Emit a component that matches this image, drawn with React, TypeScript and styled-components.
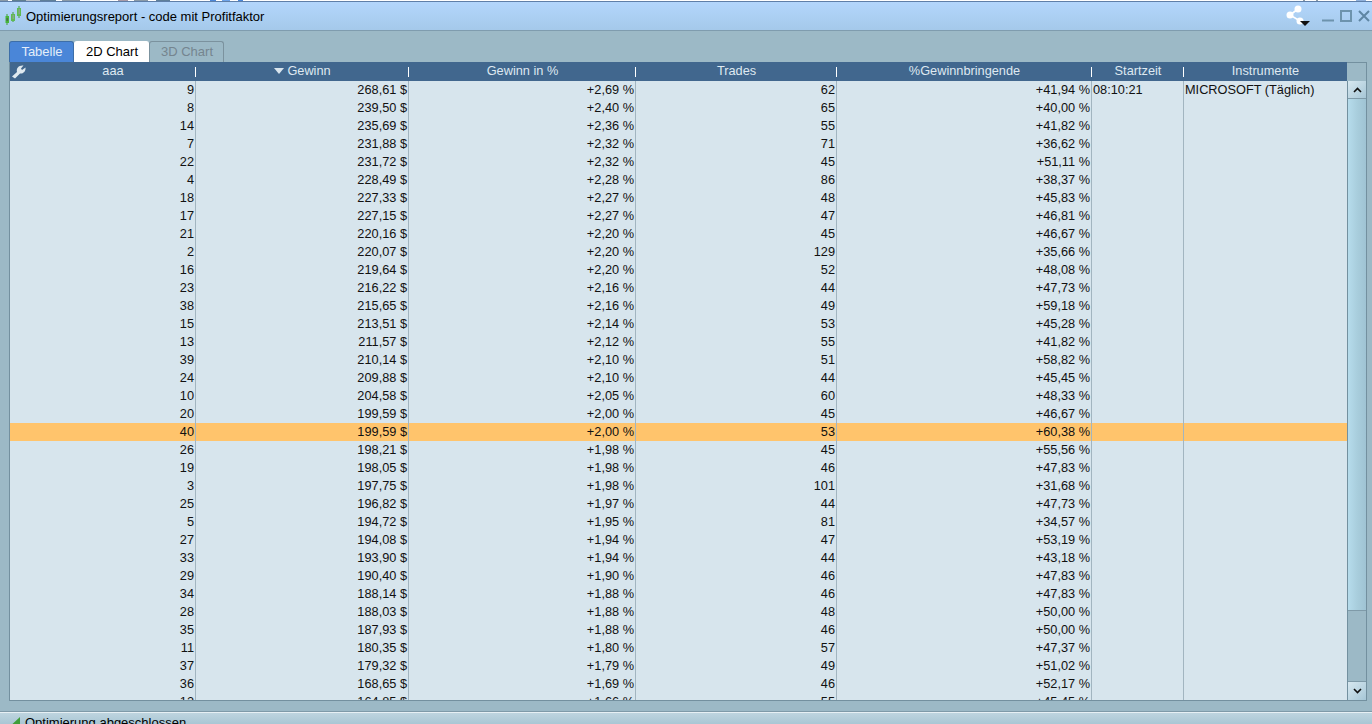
import React from 'react';
import styled, {createGlobalStyle} from 'styled-components';

const GlobalStyle = createGlobalStyle`
  html, body {
    margin: 0;
    padding: 0;
    height: 100%;
    overflow: hidden;
    background: #9cb9c6;
  }
`;

const Page = styled.div`
  width: 1372px;
  height: 724px;
  display: flex;
  flex-direction: column;
  overflow: hidden;
  background: #9cb9c6;
  font-family: "Liberation Sans", Arial, sans-serif;
  font-size: 13px;
  color: #000;
`;

// the window behind peeks out one pixel above the title bar
const TopEdge = styled.div`
  height: 1px;
  flex: none;
  background: linear-gradient(90deg,
    #8a9aa8 0 8px, #fff 8px 12px, #5f7f90 12px 26px, #b8c0c8 26px 40px, #5f7f9a 40px 56px, #fff 56px 62px, #8a9aa8 62px 80px,
    #fff 80px 118px, #a89aa8 118px 128px, #fff 128px 134px, #8a9aa8 134px 148px, #fff 148px 156px, #5f7f9a 156px 170px,
    #fff 170px 210px, #4a86d8 210px 216px, #fff 216px 222px, #6ea4ea 222px 230px, #fff 230px 238px, #4a86d8 238px 243px,
    #fff 243px 1303px, #8a9aa8 1303px 1305px, #fff 1305px 1316px, #8a9aa8 1316px 1318px, #fff 1318px 1356px,
    #8fb0dc 1356px 1366px, #fff 1366px 1372px);
`;

const TitleBar = styled.div`
  height: 30px;
  flex: none;
  box-sizing: border-box;
  display: flex;
  align-items: center;
  border-top: 1px solid #5f7fa8;
  border-bottom: 1px solid #7f9cae;
  background: linear-gradient(#b3d6fc, #a5c9ea);
  padding: 0 2px 0 5px;
`;

const TitleText = styled.span`
  margin-left: 4px;
  flex: 1;
`;

const TitleIcons = styled.div`
  display: flex;
  align-items: center;
  gap: 12px;
`;

const TabRow = styled.div`
  height: 21px;
  margin: 10px 0 0 9px;
  flex: none;
  display: flex;
  align-items: stretch;
`;

const Tab = styled.div<{$state: 'active' | 'open' | 'off'}>`
  display: flex;
  align-items: center;
  justify-content: center;
  width: ${p => (p.$state === 'active' ? 65 : 75)}px;
  box-sizing: border-box;
  padding: 0 0 2px 1px;
  border-radius: 3px 3px 0 0;
  background: ${p => (p.$state === 'active' ? '#4a86d8' : p.$state === 'open' ? '#fff' : '#9cb9c6')};
  color: ${p => (p.$state === 'active' ? '#e4eefa' : p.$state === 'open' ? '#000' : '#75858f')};
  border: 1px solid ${p => (p.$state === 'active' ? '#3d6ea8' : p.$state === 'open' ? '#fff' : '#7b929e')};
  border-bottom: none;
`;

const Table = styled.div`
  margin: 0 0 0 9px;
  width: 1358px;
  height: 639px;
  flex: none;
  display: flex;
  flex-direction: column;
  box-sizing: border-box;
  border: 1px solid #73909f;
  border-top: none;
  overflow: hidden;
`;

const columns = '186px 213px 227px 201px 255px 92px 163px';

const HeaderRow = styled.div`
  display: grid;
  grid-template-columns: ${columns} 1fr;
  height: 19px;
  flex: none;
  font-size: 12.75px;
`;

const HeaderCell = styled.div<{$last?: boolean; $wrench?: boolean}>`
  box-sizing: border-box;
  background: #41678e;
  color: #dfe9f1;
  display: flex;
  align-items: center;
  justify-content: center;
  position: relative;
  padding-left: ${p => (p.$wrench ? 20 : 0)}px;
  padding-bottom: 2px;
  &::after {
    content: '';
    display: ${p => (p.$last ? 'none' : 'block')};
    position: absolute;
    right: 0;
    top: 5px;
    width: 1px;
    height: 10px;
    background: #fff;
  }
`;

const HeaderGap = styled.div`
  background: #9cb9c6;
  border-top: 1px solid #73909f;
`;

const WrenchSlot = styled.span`
  position: absolute;
  left: 1px;
  top: 2px;
  display: flex;
`;

const SortArrow = styled.span`
  width: 0;
  height: 0;
  margin-right: 3px;
  border-left: 5px solid transparent;
  border-right: 5px solid transparent;
  border-top: 6px solid #d9e5ee;
`;

const Body = styled.div`
  flex: 1;
  display: flex;
  min-height: 0;
`;

const Rows = styled.div`
  width: 1337px;
  flex: none;
  background: #d7e5ed;
  overflow: hidden;
  font-size: 12.75px;
`;

const Row = styled.div<{$hot?: boolean}>`
  display: grid;
  grid-template-columns: ${columns};
  height: 18px;
  background: ${p => (p.$hot ? '#ffc46c' : 'transparent')};
`;

const Cell = styled.div<{$left?: boolean}>`
  box-sizing: border-box;
  border-right: 1px solid #a2b5c0;
  line-height: 17px;
  padding: 0 1px;
  text-align: ${p => (p.$left ? 'left' : 'right')};
  white-space: nowrap;
  overflow: hidden;
  color: #111;
  &:last-child {
    border-right: none;
  }
`;

const ScrollBar = styled.div`
  width: 19px;
  flex: none;
  display: flex;
  flex-direction: column;
  box-sizing: border-box;
  border-left: 1px solid #73909f;
  background: #9cb9c6;
`;

const ScrollButton = styled.div<{$down?: boolean}>`
  height: ${p => (p.$down ? 19 : 18)}px;
  flex: none;
  display: flex;
  align-items: center;
  justify-content: center;
  box-sizing: border-box;
  background: linear-gradient(135deg, #d7e8f0, #a6c6d6);
  border: solid #7f9aa8;
  border-width: ${p => (p.$down ? '1px 0 0 0' : '0 0 1px 0')};
`;

const ScrollThumb = styled.div`
  height: 512px;
  flex: none;
  box-sizing: border-box;
  border-bottom: 1px solid #7f9aa8;
  background: linear-gradient(90deg, #b6dcec, #a9cedd 50%, #9fc3d3);
`;

const ScrollTrack = styled.div`
  flex: 1;
`;

const StatusBar = styled.div`
  margin-top: 10px;
  flex: 1;
  min-height: 0;
  display: flex;
  align-items: flex-start;
  box-sizing: border-box;
  border-top: 1px solid #7f9aa8;
  box-shadow: inset 0 1px 0 #e7f0f4;
  background: linear-gradient(#c0d6e0, #a9c6d4);
  padding: 4px 0 0 7px;
`;

const StatusIcon = styled.svg`
  margin-top: 1px;
  flex: none;
`;

const StatusText = styled.span`
  margin-left: 5px;
  line-height: 14px;
`;

const rows: [string, string, string, string, string][] = [
  ['9', '268,61 $', '+2,69 %', '62', '+41,94 %'],
  ['8', '239,50 $', '+2,40 %', '65', '+40,00 %'],
  ['14', '235,69 $', '+2,36 %', '55', '+41,82 %'],
  ['7', '231,88 $', '+2,32 %', '71', '+36,62 %'],
  ['22', '231,72 $', '+2,32 %', '45', '+51,11 %'],
  ['4', '228,49 $', '+2,28 %', '86', '+38,37 %'],
  ['18', '227,33 $', '+2,27 %', '48', '+45,83 %'],
  ['17', '227,15 $', '+2,27 %', '47', '+46,81 %'],
  ['21', '220,16 $', '+2,20 %', '45', '+46,67 %'],
  ['2', '220,07 $', '+2,20 %', '129', '+35,66 %'],
  ['16', '219,64 $', '+2,20 %', '52', '+48,08 %'],
  ['23', '216,22 $', '+2,16 %', '44', '+47,73 %'],
  ['38', '215,65 $', '+2,16 %', '49', '+59,18 %'],
  ['15', '213,51 $', '+2,14 %', '53', '+45,28 %'],
  ['13', '211,57 $', '+2,12 %', '55', '+41,82 %'],
  ['39', '210,14 $', '+2,10 %', '51', '+58,82 %'],
  ['24', '209,88 $', '+2,10 %', '44', '+45,45 %'],
  ['10', '204,58 $', '+2,05 %', '60', '+48,33 %'],
  ['20', '199,59 $', '+2,00 %', '45', '+46,67 %'],
  ['40', '199,59 $', '+2,00 %', '53', '+60,38 %'],
  ['26', '198,21 $', '+1,98 %', '45', '+55,56 %'],
  ['19', '198,05 $', '+1,98 %', '46', '+47,83 %'],
  ['3', '197,75 $', '+1,98 %', '101', '+31,68 %'],
  ['25', '196,82 $', '+1,97 %', '44', '+47,73 %'],
  ['5', '194,72 $', '+1,95 %', '81', '+34,57 %'],
  ['27', '194,08 $', '+1,94 %', '47', '+53,19 %'],
  ['33', '193,90 $', '+1,94 %', '44', '+43,18 %'],
  ['29', '190,40 $', '+1,90 %', '46', '+47,83 %'],
  ['34', '188,14 $', '+1,88 %', '46', '+47,83 %'],
  ['28', '188,03 $', '+1,88 %', '48', '+50,00 %'],
  ['35', '187,93 $', '+1,88 %', '46', '+50,00 %'],
  ['11', '180,35 $', '+1,80 %', '57', '+47,37 %'],
  ['37', '179,32 $', '+1,79 %', '49', '+51,02 %'],
  ['36', '168,65 $', '+1,69 %', '46', '+52,17 %'],
  ['12', '164,85 $', '+1,66 %', '55', '+45,45 %'],
];

const headers = ['aaa', 'Gewinn', 'Gewinn in %', 'Trades', '%Gewinnbringende', 'Startzeit', 'Instrumente'];

function Candles() {
  return (
    <svg width="17" height="20" viewBox="0 0 17 20">
      <path d="M2 8v11M8 6v10M14 0v12" stroke="#3f9f35" strokeWidth="1"/>
      <rect x="0.500" y="10" width="3.500" height="7" fill="#46b53a"/>
      <rect x="1.500" y="12" width="1.500" height="3" fill="#4d6f4a"/>
      <rect x="6" y="8" width="4" height="7" fill="#5fbb52"/>
      <rect x="7.500" y="9" width="1.500" height="4" fill="#8aa58c"/>
      <rect x="12" y="2" width="4" height="8" fill="#5fbb52"/>
      <rect x="13.500" y="3" width="1.500" height="5" fill="#8aa58c"/>
    </svg>
  );
}

function ShareIcon() {
  return (
    <svg width="26" height="22" viewBox="0 0 26 22">
      <path d="M14 4L6 10L16 16" stroke="#fff" strokeWidth="1.600" fill="none"/>
      <circle cx="14" cy="4" r="3.500" fill="#fff"/>
      <circle cx="6" cy="10" r="3.500" fill="#fff"/>
      <circle cx="16" cy="16" r="3.500" fill="#fff"/>
      <path d="M16 16h10l-5 5z" fill="#111"/>
    </svg>
  );
}

function WindowButtons() {
  return (
    <svg width="48" height="14" viewBox="0 0 48 14">
      <path d="M0 11.500h12" stroke="#6d93ad" strokeWidth="2"/>
      <rect x="19" y="2" width="10" height="10" fill="none" stroke="#6d93ad" strokeWidth="2"/>
      <path d="M37 2l10 10M47 2L37 12" stroke="#5f86a3" strokeWidth="2"/>
    </svg>
  );
}

function Wrench() {
  return (
    <svg width="15" height="15" viewBox="0 0 15 15">
      <path d="M1 12.500L6 8C5 4 8 1 12.500 1.500L10 4.500L11 6L14.500 3.500C15 7.500 12 10 9 9.500L4 14.500Z" fill="#dfe9ef"/>
    </svg>
  );
}

function Chevron({down}: {down?: boolean}) {
  return (
    <svg width="9" height="6" viewBox="0 0 9 6">
      <path d={down ? 'M1 1l3.500 3.500L8 1' : 'M1 5l3.500-3.500L8 5'} stroke="#111" strokeWidth="1.600" fill="none"/>
    </svg>
  );
}

function App() {
  return (
    <Page>
      <GlobalStyle/>
      <TopEdge/>
      <TitleBar>
        <Candles/>
        <TitleText>Optimierungsreport - code mit Profitfaktor</TitleText>
        <TitleIcons>
          <ShareIcon/>
          <WindowButtons/>
        </TitleIcons>
      </TitleBar>
      <TabRow>
        <Tab $state="active">Tabelle</Tab>
        <Tab $state="open">2D Chart</Tab>
        <Tab $state="off">3D Chart</Tab>
      </TabRow>
      <Table>
        <HeaderRow>
          {headers.map((h, i) => (
            <HeaderCell key={h} $last={i === headers.length - 1} $wrench={i === 0}>
              {i === 0 && <WrenchSlot><Wrench/></WrenchSlot>}
              {i === 1 && <SortArrow/>}
              {h}
            </HeaderCell>
          ))}
          <HeaderGap/>
        </HeaderRow>
        <Body>
          <Rows>
            {rows.map((r, i) => (
              <Row key={r[0]} $hot={r[0] === '40'}>
                {r.map((c, j) => <Cell key={j}>{c}</Cell>)}
                <Cell $left>{i === 0 ? '08:10:21' : ''}</Cell>
                <Cell $left>{i === 0 ? 'MICROSOFT (Täglich)' : ''}</Cell>
              </Row>
            ))}
          </Rows>
          <ScrollBar>
            <ScrollButton><Chevron/></ScrollButton>
            <ScrollThumb/>
            <ScrollTrack/>
            <ScrollButton $down><Chevron down/></ScrollButton>
          </ScrollBar>
        </Body>
      </Table>
      <StatusBar>
        <StatusIcon width="13" height="12" viewBox="0 0 13 12">
          <path d="M0 12L13 0V12Z" fill="#3f9e3a"/>
        </StatusIcon>
        <StatusText>Optimierung abgeschlossen</StatusText>
      </StatusBar>
    </Page>
  );
}

export default App;
